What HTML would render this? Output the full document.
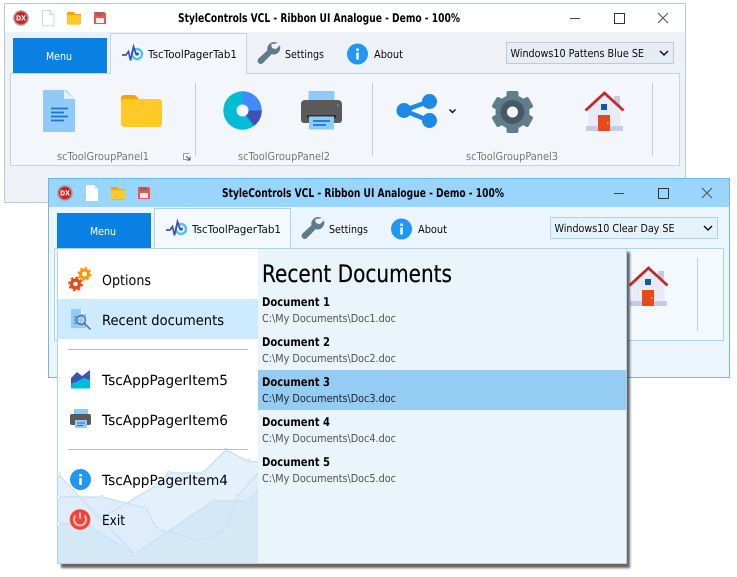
<!DOCTYPE html>
<html><head><meta charset="utf-8"><style>
html,body{margin:0;padding:0;background:#fff;width:737px;height:577px;overflow:hidden}
svg{display:block}
text{font-family:"DejaVu Sans","Liberation Sans",sans-serif;font-size:11px;fill:#0a0a0a}
.b{font-weight:bold;font-size:12px;fill:#000}
.g{fill:#777}
.p{fill:#505050}
.m{font-size:14px;fill:#000}
</style></head><body>
<svg width="737" height="577" viewBox="0 0 737 577" xmlns="http://www.w3.org/2000/svg" text-rendering="geometricPrecision">
<defs>
<filter id="sh" x="-5%" y="-5%" width="110%" height="110%"><feGaussianBlur stdDeviation="1.1"/></filter>
<symbol id="dx" overflow="visible"><circle cx="21" cy="18" r="7.8" fill="#9e9e9e"/><circle cx="21" cy="18" r="6.2" fill="#d32027"/><text x="16" y="20.5" textLength="10" lengthAdjust="spacingAndGlyphs" style="font-size:7px;font-weight:bold;fill:#fff">DX</text></symbol>
<symbol id="fold" overflow="visible"><path d="M67 13.500a1.500 1.500 0 0 1 1.500-1.500h5l2 2h5.500v9.500a1 1 0 0 1-1 1h-12a1 1 0 0 1-1-1z" fill="#ffa000"/><rect x="67" y="15" width="14" height="9" rx="1" fill="#ffca28"/></symbol>
<symbol id="save" overflow="visible"><path d="M94 12h10.500l1.500 1.500v10.500h-12z" fill="#ef5350"/><rect x="96" y="12" width="7" height="4" fill="#b5565a"/><rect x="96" y="18" width="8" height="5" fill="#fdecec"/></symbol>
<symbol id="pulse" overflow="visible"><circle cx="137" cy="54" r="5" fill="none" stroke="#4dc4e6" stroke-width="2.400"/><circle cx="137" cy="54" r="1.800" fill="#1f88c8"/><path d="M122 55h4l2.500-3.500 2 9 3-14 2.500 7.500h3" fill="none" stroke="#3f51b5" stroke-width="1.700"/></symbol>
<symbol id="wrench" overflow="visible"><path d="M278 43c-3.300-1.700-7.300-1-9.300 1.700-1.400 1.800-1.700 3.800-1.200 5.600l-8.700 8c-1.700 1.500-1.400 3.700-.2 4.800 1.300 1.200 3.300 1.200 4.700-.3l8.200-8.500c2.700.7 5.500-.1 7.200-2.200 1.600-2 2-4.400 1.200-6.700l-4 3.700-3.800-1-1-3.700z" fill="#5f7a88"/></symbol>
<symbol id="info" overflow="visible"><circle cx="357.500" cy="54" r="10.500" fill="#2196f3"/><rect x="356.300" y="52.500" width="2.500" height="7" fill="#fff"/><rect x="356.300" y="48.500" width="2.500" height="2.500" fill="#fff"/></symbol>
<symbol id="chev" overflow="visible"><path d="M0 0l4 4 4-4" fill="none" stroke="#111" stroke-width="1.500"/></symbol>
<symbol id="house" overflow="visible">
<rect x="614" y="96" width="6" height="14" fill="#c5cae9"/>
<path d="M604.500 94l-16 15v20h32v-20z" fill="#e8eaf6"/>
<rect x="586" y="126" width="37" height="5" fill="#c5cae9"/>
<path d="M585.500 110.500l19-17.500 19 17.500" fill="none" stroke="#c62828" stroke-width="2.800"/>
<rect x="601" y="104" width="6" height="6" fill="#0d5aa7"/>
<rect x="598" y="115" width="12" height="16" fill="#e64a19"/>
<rect x="607" y="122" width="1.300" height="2" fill="#ffab91"/>
</symbol>
</defs>

<!-- WINDOW 1 -->
<rect x="4.500" y="3.500" width="681" height="199" fill="#eef2f7" stroke="#b6cadd"/>
<rect x="5" y="4" width="680" height="28" fill="#fff"/>
<use href="#dx"/>
<path d="M42.500 10.500h7.500l4 4v11.500h-11.500z" fill="#fff" stroke="#bbdefb"/><path d="M50 10.500v4h4" fill="#e3f2fd" stroke="#bbdefb"/>
<use href="#fold"/>
<use href="#save"/>
<text x="178" y="22" textLength="282" lengthAdjust="spacingAndGlyphs" class="b">StyleControls VCL - Ribbon UI Analogue - Demo - 100%</text>
<rect x="570" y="18" width="10" height="1" fill="#444"/>
<rect x="614.500" y="13.500" width="10" height="10" fill="none" stroke="#333"/>
<path d="M658 13l10 10M668 13l-10 10" stroke="#555" stroke-width="1.100"/>
<rect x="13" y="38" width="94" height="35" fill="#0b80e3"/>
<text x="46" y="60" textLength="26" lengthAdjust="spacingAndGlyphs" style="fill:#fff">Menu</text>
<rect x="10.500" y="73.500" width="669" height="92" fill="#f3f6fa" stroke="#c3d4e4"/>
<path d="M110.500 73.500v-40h136v40" fill="#f3f6fa" stroke="#c3d4e4"/>
<rect x="111" y="72" width="135" height="3" fill="#f3f6fa"/>
<use href="#pulse"/>
<text x="148" y="58" textLength="89" lengthAdjust="spacingAndGlyphs">TscToolPagerTab1</text>
<use href="#wrench"/>
<text x="285" y="58" textLength="39" lengthAdjust="spacingAndGlyphs">Settings</text>
<use href="#info"/>
<text x="374" y="58" textLength="29" lengthAdjust="spacingAndGlyphs">About</text>
<rect x="506.500" y="42.500" width="167" height="21" fill="#e6ecf4" stroke="#b8cbdf"/>
<text x="510.500" y="57" textLength="133.500" lengthAdjust="spacingAndGlyphs">Windows10 Pattens Blue SE</text>
<use href="#chev" x="660" y="51"/>

<!-- panel 1 icons -->
<path d="M43 90h23l9 9v33h-32z" fill="#90caf9"/><path d="M64 90l11 9h-11z" fill="#e3f2fd"/>
<path d="M51 108.500h17M51 112.500h13M51 116.500h17M51 120.500h13" stroke="#1976d2" stroke-width="1.800"/>
<path d="M121 98a3 3 0 0 1 3-3h11l4 4h20v6h-38z" fill="#ffa000"/>
<rect x="121" y="99" width="41" height="28" rx="3" fill="#ffca28"/>
<rect x="195" y="83" width="1" height="73" fill="#c8ccd0"/>
<text x="57" y="160" textLength="92" lengthAdjust="spacingAndGlyphs" class="g">scToolGroupPanel1</text>
<path d="M183.500 153.500h6M183.500 153.500v6h3" fill="none" stroke="#999"/><path d="M186 156l4 4m0-3.500v3.500h-3.500" fill="none" stroke="#555"/>
<text x="238" y="160" textLength="92" lengthAdjust="spacingAndGlyphs" class="g">scToolGroupPanel2</text>
<text x="466" y="160" textLength="92" lengthAdjust="spacingAndGlyphs" class="g">scToolGroupPanel3</text>
<!-- donut -->
<circle cx="242.500" cy="110.500" r="19.200" fill="#00bcd4"/>
<path d="M242.500 110.500V91.300a19.200 19.200 0 0 1 19.200 19.200z" fill="#448aff"/>
<path d="M242.500 110.500h19.200a19.200 19.200 0 0 1-7.600 15.300z" fill="#3f51b5"/>
<circle cx="242.500" cy="110.500" r="6" fill="#f3f6fa"/>
<!-- printer -->
<rect x="308.500" y="91" width="26" height="11" fill="#90caf9"/>
<path d="M301 104a4 4 0 0 1 4-4h33a4 4 0 0 1 4 4v16a3 3 0 0 1-3 3h-35a3 3 0 0 1-3-3z" fill="#5a5a5a"/>
<rect x="337" y="104" width="2" height="2" fill="#26a69a"/>
<rect x="307" y="115" width="29" height="3" fill="#2e2e2e"/>
<rect x="309" y="116.500" width="25" height="13" fill="#90caf9"/>
<path d="M313 121h17M313 125h13" stroke="#1976d2" stroke-width="1.700"/>
<rect x="372" y="83" width="1" height="73" fill="#c8ccd0"/>
<!-- share -->
<path d="M404 110.500l26-9.500M404 110.500l26 10.500" stroke="#1e88e5" stroke-width="4.500"/>
<circle cx="404" cy="110.500" r="7.500" fill="#1e88e5"/><circle cx="429.500" cy="101.500" r="7.500" fill="#1e88e5"/><circle cx="429.500" cy="120.500" r="7.500" fill="#1e88e5"/>
<path d="M449.500 109.500l3 3 3-3" fill="none" stroke="#111" stroke-width="1.500"/>
<!-- gear -->
<g transform="translate(512.500 112)" fill="#607d8b">
<circle r="17"/>
<rect x="-6" y="-21" width="12" height="42" rx="2"/>
<rect x="-6" y="-21" width="12" height="42" rx="2" transform="rotate(60)"/>
<rect x="-6" y="-21" width="12" height="42" rx="2" transform="rotate(120)"/>
<circle r="12" fill="#455a64"/><circle r="5.500" fill="#f3f6fa"/>
</g>
<use href="#house"/>
<rect x="652" y="83" width="1" height="73" fill="#c8ccd0"/>

<!-- WINDOW 2 -->
<rect x="48.500" y="178.500" width="681" height="199" fill="#ecf5fc" stroke="#6fb5e6"/>
<rect x="49" y="179" width="680" height="28" fill="#99d5fc"/>
<g transform="translate(44 175)">
<use href="#dx"/>
<path d="M42 10h8l4 4v12h-12z" fill="#fff"/><path d="M50 10v4h4z" fill="#d5ecfc"/>
<use href="#fold"/>
<use href="#save"/>
<text x="178" y="22" textLength="282" lengthAdjust="spacingAndGlyphs" class="b">StyleControls VCL - Ribbon UI Analogue - Demo - 100%</text>
<rect x="570" y="18" width="10" height="1" fill="#444"/>
<rect x="614.500" y="13.500" width="10" height="10" fill="none" stroke="#333"/>
<path d="M658 13l10 10M668 13l-10 10" stroke="#555" stroke-width="1.100"/>
<rect x="13" y="38" width="94" height="35" fill="#0b80e3"/>
<text x="46" y="60" textLength="26" lengthAdjust="spacingAndGlyphs" style="fill:#fff">Menu</text>
<rect x="10.500" y="73.500" width="669" height="92" fill="#f4f9fe" stroke="#aad3ee"/>
<path d="M110.500 73.500v-40h136v40" fill="#f4f9fe" stroke="#aad3ee"/>
<use href="#pulse"/>
<text x="148" y="58" textLength="89" lengthAdjust="spacingAndGlyphs">TscToolPagerTab1</text>
<use href="#wrench"/>
<text x="285" y="58" textLength="39" lengthAdjust="spacingAndGlyphs">Settings</text>
<use href="#info"/>
<text x="374" y="58" textLength="29" lengthAdjust="spacingAndGlyphs">About</text>
<rect x="506.500" y="42.500" width="167" height="21" fill="#e6f2f9" stroke="#a8d4ef"/>
<text x="510.500" y="57" textLength="120" lengthAdjust="spacingAndGlyphs">Windows10 Clear Day SE</text>
<use href="#chev" x="660" y="51"/>
<use href="#house"/>
<rect x="653" y="83" width="1" height="73" fill="#c8ccd0"/>
</g>

<!-- DROPDOWN -->
<rect x="61" y="252" width="569" height="316" fill="#333" opacity=".75" filter="url(#sh)"/>
<rect x="57.500" y="248.500" width="569" height="315" fill="#eaf4fb" stroke="#aad3ee" stroke-width="1"/>
<rect x="58" y="249" width="200" height="314" fill="#fff"/>
<rect x="258" y="249" width="368" height="314" fill="#eaf4fb"/>
<!-- chart -->
<g>
<path d="M58 563V474L92 510 103 517 157 485 169 473 203 473 226 450 248 461 258 462V563z" fill="#e5f1fa"/>
<path d="M58 563V497H102L146 508 157 529 203 541 226 529 237 497 258 473V563z" fill="#deedf9"/>
<path d="M58 563V524H85L135 554 213 501H248L258 491V563z" fill="#d4e8f6"/>
<g fill="none" stroke="#c9e2f5" stroke-width="1.500">
<path d="M58 474L92 510 135 554 213 501H248L258 491"/>
<path d="M103 517L157 485 169 473H203L226 450 248 461 258 462"/>
<path d="M58 497H102L146 508 157 529 203 541 226 529 237 497 258 473"/>
<path d="M58 524H85L135 554"/>
</g>
<g fill="#e9f4fc" stroke="#c9e2f5">
<circle cx="58.500" cy="474" r="1.800"/><circle cx="101.700" cy="497" r="1.800"/><circle cx="146" cy="508" r="1.800"/><circle cx="157" cy="529" r="1.800"/><circle cx="203" cy="541" r="1.800"/><circle cx="226" cy="529" r="1.800"/><circle cx="237" cy="497" r="1.800"/><circle cx="213" cy="501" r="1.800"/><circle cx="248" cy="501" r="1.800"/><circle cx="135" cy="554" r="1.800"/><circle cx="157" cy="485" r="1.800"/><circle cx="169" cy="473" r="1.800"/><circle cx="203" cy="473" r="1.800"/><circle cx="226" cy="450" r="1.800"/><circle cx="248" cy="461" r="1.800"/><circle cx="58.500" cy="497" r="1.800"/><circle cx="58.500" cy="524" r="1.800"/>
</g>
</g>
<rect x="58" y="299" width="200" height="40" fill="#cdeafe"/>
<rect x="68" y="349" width="180" height="1" fill="#bdbdbd"/>
<rect x="68" y="449" width="180" height="1" fill="#bdbdbd"/>
<!-- options gears -->
<g fill="none">
<g transform="translate(84.500 274)" stroke="#ff9800"><circle r="4" stroke-width="3"/><circle r="6" stroke-width="1.800" stroke-dasharray="2.400 2.300"/></g>
<g transform="translate(75.500 284)" stroke="#e64a19"><circle r="4" stroke-width="3.400"/><circle r="6.500" stroke-width="1.800" stroke-dasharray="2.500 2.600"/></g>
</g>
<text x="102" y="285" textLength="49" lengthAdjust="spacingAndGlyphs" class="m">Options</text>
<!-- recent icon -->
<path d="M71 309h10l5 5v14h-15z" fill="#90caf9"/><path d="M81 309l5 5h-5z" fill="#e3f2fd"/>
<path d="M74 317h8M74 320h8M74 323h8" stroke="#1976d2"/>
<circle cx="81" cy="320" r="4.500" fill="#bcdcf6" fill-opacity=".6" stroke="#546e7a" stroke-width="1.300"/><path d="M84.500 323.500l6 6" stroke="#546e7a" stroke-width="1.500"/>
<text x="102" y="325" textLength="122" lengthAdjust="spacingAndGlyphs" class="m">Recent documents</text>
<!-- item5 -->
<rect x="71" y="378" width="19" height="10.500" fill="#00bcd4"/>
<path d="M71 384V378L77 372 82 376 90 370V380L84 378 78 381z" fill="#3f51b5"/>
<text x="102" y="385" textLength="126" lengthAdjust="spacingAndGlyphs" class="m">TscAppPagerItem5</text>
<!-- item6 -->
<rect x="74" y="409" width="14" height="6" fill="#90caf9"/>
<rect x="70" y="414" width="21" height="11" rx="2" fill="#5a5a5a"/>
<rect x="75" y="420" width="12" height="8" fill="#90caf9"/>
<path d="M77 423h8M77 425.500h6" stroke="#1976d2"/>
<text x="102" y="425" textLength="126" lengthAdjust="spacingAndGlyphs" class="m">TscAppPagerItem6</text>
<!-- item4 -->
<circle cx="80.500" cy="479.500" r="10.500" fill="#2196f3"/><rect x="79.300" y="478" width="2.500" height="7" fill="#fff"/><rect x="79.300" y="474" width="2.500" height="2.500" fill="#fff"/>
<text x="102" y="485" textLength="126" lengthAdjust="spacingAndGlyphs" class="m">TscAppPagerItem4</text>
<!-- exit -->
<circle cx="80" cy="519.500" r="10.300" fill="#f44336"/>
<path d="M75.500 515.500a6 6 0 1 0 9 0" fill="none" stroke="#fbc9c4" stroke-width="1.800"/><path d="M80 512.500v6.500" stroke="#fbc9c4" stroke-width="1.800"/>
<text x="102" y="525" textLength="23" lengthAdjust="spacingAndGlyphs" class="m">Exit</text>

<!-- right -->
<rect x="258" y="370" width="368.500" height="40" fill="#95ccf3"/>
<text x="262" y="282" textLength="190" lengthAdjust="spacingAndGlyphs" style="font-size:24px;fill:#000;stroke:#000;stroke-width:.2px">Recent Documents</text>
<text x="262" y="306" textLength="68" lengthAdjust="spacingAndGlyphs" class="b">Document 1</text>
<text x="262" y="322" textLength="134" lengthAdjust="spacingAndGlyphs" class="p">C:\My Documents\Doc1.doc</text>
<text x="262" y="346" textLength="68" lengthAdjust="spacingAndGlyphs" class="b">Document 2</text>
<text x="262" y="362" textLength="134" lengthAdjust="spacingAndGlyphs" class="p">C:\My Documents\Doc2.doc</text>
<text x="262" y="386" textLength="68" lengthAdjust="spacingAndGlyphs" class="b">Document 3</text>
<text x="262" y="402" textLength="134" lengthAdjust="spacingAndGlyphs" style="fill:#222">C:\My Documents\Doc3.doc</text>
<text x="262" y="426" textLength="68" lengthAdjust="spacingAndGlyphs" class="b">Document 4</text>
<text x="262" y="442" textLength="134" lengthAdjust="spacingAndGlyphs" class="p">C:\My Documents\Doc4.doc</text>
<text x="262" y="466" textLength="68" lengthAdjust="spacingAndGlyphs" class="b">Document 5</text>
<text x="262" y="482" textLength="134" lengthAdjust="spacingAndGlyphs" class="p">C:\My Documents\Doc5.doc</text>
</svg>
</body></html>
